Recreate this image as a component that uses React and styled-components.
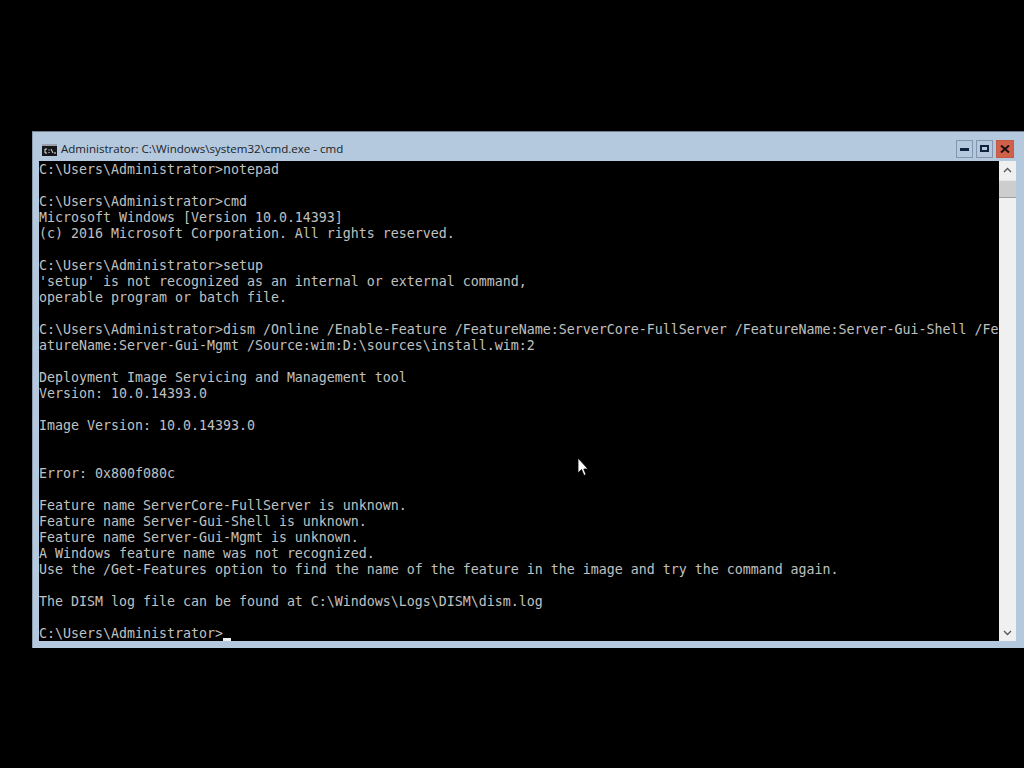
import React from 'react';
import styled, { createGlobalStyle } from 'styled-components';

const Global = createGlobalStyle`
    html, body {
        margin: 0;
        padding: 0;
        background: #000;
        overflow: hidden;
    }
`;

const Desktop = styled.div`
    position: relative;
    width: 1024px;
    height: 768px;
    padding: 131px 0 0 32px;
    box-sizing: border-box;
    background: #000;
    overflow: hidden;
`;

const Window = styled.div`
    width: 992px;
    height: 517px;
    box-sizing: border-box;
    display: flex;
    flex-direction: column;
    background: #b4c8de;
    border-top: 1px solid #6f7f90;
    border-left: 1px solid #8d9cad;
`;

const TitleBar = styled.div`
    height: 29px;
    flex: none;
    box-sizing: border-box;
    display: flex;
    align-items: center;
    padding: 6px 10px 0 9px;
`;

const Title = styled.span`
    margin: -2px 0 0 4px;
    flex: 1;
    font: 11.55px "Open Sans", "Liberation Sans", Arial, sans-serif;
    color: #1a1f26;
`;

const Controls = styled.div`
    display: flex;
    gap: 3px;
    margin-top: -2px;
`;

const Control = styled.div`
    width: ${p => (p.$close ? '18px' : '17px')};
    height: 18px;
    box-sizing: border-box;
    display: flex;
    align-items: center;
    justify-content: center;
    background: ${p => (p.$close ? '#d0604a' : 'transparent')};
    border: 1px solid ${p => (p.$close ? '#c25a45' : '#8496ab')};
`;

const Body = styled.div`
    display: flex;
    margin-left: 6px;
    height: 480px;
`;

const Console = styled.pre`
    margin: 0;
    width: 960px;
    height: 480px;
    flex: none;
    box-sizing: border-box;
    padding-top: 1px;
    background: #000;
    color: #c0c0c0;
    font: 13.29px/16px "DejaVu Sans Mono", "Liberation Mono", monospace;
    overflow: hidden;
`;

const Caret = styled.span`
    display: inline-block;
    width: 8px;
    height: 3px;
    background: #f0f0f0;
    vertical-align: -3px;
`;

const Scrollbar = styled.div`
    width: 17px;
    flex: none;
    background: #f0f0f0;
    display: flex;
    flex-direction: column;
`;

const ScrollButton = styled.div`
    height: 17px;
    flex: none;
    display: flex;
    align-items: center;
    justify-content: center;
    background: #f0f0f0;
`;

const Thumb = styled.div`
    height: 16px;
    flex: none;
    background: #cdcdcd;
    border-top: 1px solid #e6e6e6;
    border-bottom: 1px solid #a0a0a0;
    margin-top: 2px;
`;

const Track = styled.div`
    flex: 1;
`;

const Pointer = styled.svg`
    position: absolute;
    left: 577px;
    top: 457px;
`;

const lines = `C:\\Users\\Administrator>notepad

C:\\Users\\Administrator>cmd
Microsoft Windows [Version 10.0.14393]
(c) 2016 Microsoft Corporation. All rights reserved.

C:\\Users\\Administrator>setup
'setup' is not recognized as an internal or external command,
operable program or batch file.

C:\\Users\\Administrator>dism /Online /Enable-Feature /FeatureName:ServerCore-FullServer /FeatureName:Server-Gui-Shell /Fe
atureName:Server-Gui-Mgmt /Source:wim:D:\\sources\\install.wim:2

Deployment Image Servicing and Management tool
Version: 10.0.14393.0

Image Version: 10.0.14393.0


Error: 0x800f080c

Feature name ServerCore-FullServer is unknown.
Feature name Server-Gui-Shell is unknown.
Feature name Server-Gui-Mgmt is unknown.
A Windows feature name was not recognized.
Use the /Get-Features option to find the name of the feature in the image and try the command again.

The DISM log file can be found at C:\\Windows\\Logs\\DISM\\dism.log

C:\\Users\\Administrator>`;

function CmdIcon() {
    return (
        <svg width="15" height="12" viewBox="0 0 15 12">
            <rect x="0" y="0" width="15" height="12" fill="#15171a" />
            <rect x="0" y="0" width="15" height="2" fill="#9aa3ad" />
            <path d="M5 5H3V9H5M7 5.5V6.5M7 8V9M9 5L11 9M12 9H14" stroke="#e8e8e8" strokeWidth="1" fill="none" />
        </svg>
    );
}

export default function App() {
    return (
        <Desktop>
            <Global />
            <Window>
                <TitleBar>
                    <CmdIcon />
                    <Title>Administrator: C:\Windows\system32\cmd.exe - cmd</Title>
                    <Controls>
                        <Control>
                            <svg width="9" height="4" viewBox="0 0 9 4"><rect width="9" height="3" y="1" fill="#10243f" /></svg>
                        </Control>
                        <Control>
                            <svg width="9" height="7" viewBox="0 0 9 7"><rect x="1" y="1" width="7" height="5" fill="none" stroke="#10243f" strokeWidth="2" /></svg>
                        </Control>
                        <Control $close>
                            <svg width="10" height="8" viewBox="0 0 10 8"><path d="M1 0.5L9 7.5M9 0.5L1 7.5" stroke="#1c1010" strokeWidth="2" /></svg>
                        </Control>
                    </Controls>
                </TitleBar>
                <Body>
                    <Console>{lines}<Caret /></Console>
                    <Scrollbar>
                        <ScrollButton>
                            <svg width="9" height="6" viewBox="0 0 9 6"><path d="M1 5L4.5 1.5L8 5" stroke="#555" strokeWidth="1.3" fill="none" /></svg>
                        </ScrollButton>
                        <Thumb />
                        <Track />
                        <ScrollButton>
                            <svg width="9" height="6" viewBox="0 0 9 6"><path d="M1 1L4.5 4.5L8 1" stroke="#555" strokeWidth="1.3" fill="none" /></svg>
                        </ScrollButton>
                    </Scrollbar>
                </Body>
            </Window>
            <Pointer width="12" height="20" viewBox="0 0 12 20">
                <path d="M1 1V16L4.5 12.5L7 18.5L9 17.5L6.8 12H11Z" fill="#fff" stroke="#000" strokeWidth="0.8" />
            </Pointer>
        </Desktop>
    );
}
